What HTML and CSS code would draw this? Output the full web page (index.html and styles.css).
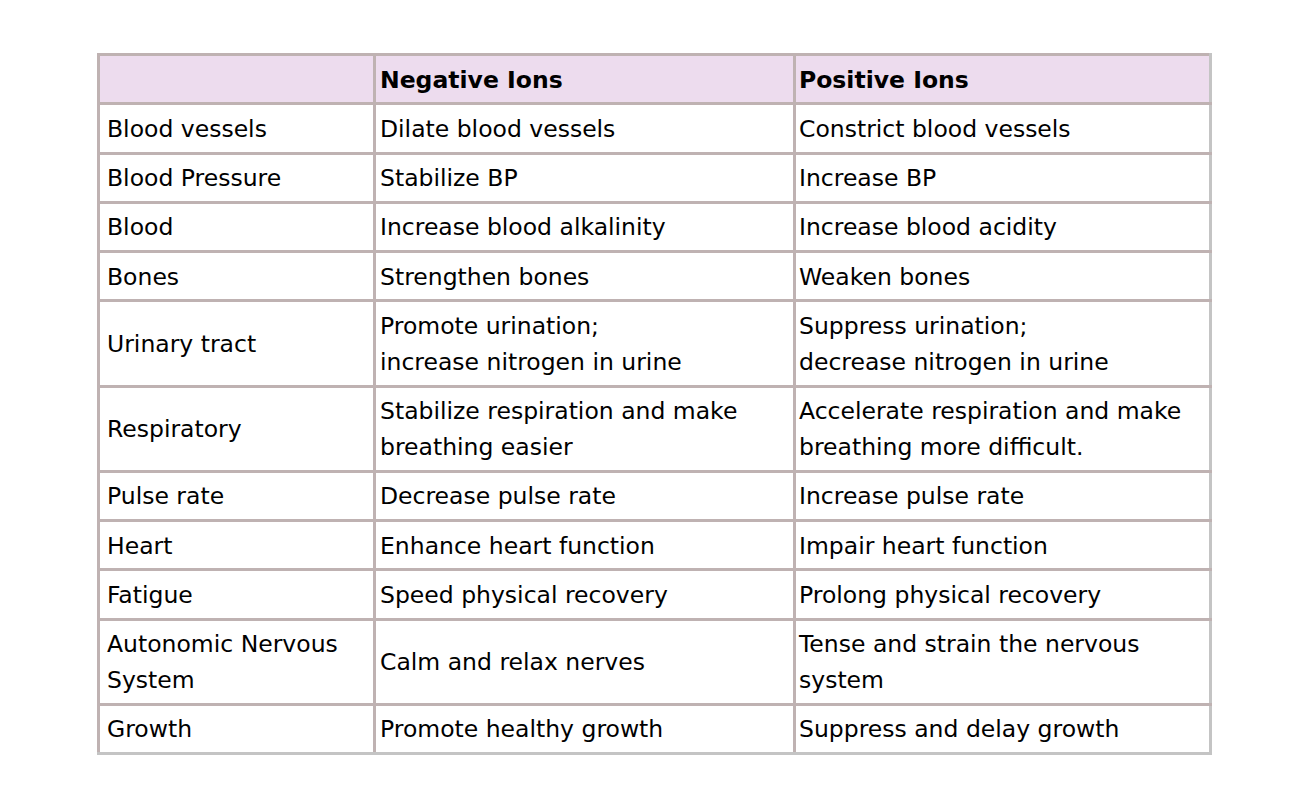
FILE: index.html
```html
<!DOCTYPE html>
<html>
<head>
<meta charset="utf-8">
<link rel="stylesheet" href="styles.css">
</head>
<body>
<table class="ions">
  <colgroup>
    <col class="c1"><col class="c2"><col class="c3">
  </colgroup>
  <thead>
    <tr><th></th><th>Negative Ions</th><th>Positive Ions</th></tr>
  </thead>
  <tbody>
    <tr><td>Blood vessels</td><td>Dilate blood vessels</td><td>Constrict blood vessels</td></tr>
    <tr><td>Blood Pressure</td><td>Stabilize BP</td><td>Increase BP</td></tr>
    <tr><td>Blood</td><td>Increase blood alkalinity</td><td>Increase blood acidity</td></tr>
    <tr><td>Bones</td><td>Strengthen bones</td><td>Weaken bones</td></tr>
    <tr><td>Urinary tract</td><td>Promote urination;<br>increase nitrogen in urine</td><td>Suppress urination;<br>decrease nitrogen in urine</td></tr>
    <tr><td>Respiratory</td><td>Stabilize respiration and make breathing easier</td><td>Accelerate respiration and make breathing more difficult.</td></tr>
    <tr><td>Pulse rate</td><td>Decrease pulse rate</td><td>Increase pulse rate</td></tr>
    <tr><td>Heart</td><td>Enhance heart function</td><td>Impair heart function</td></tr>
    <tr><td>Fatigue</td><td>Speed physical recovery</td><td>Prolong physical recovery</td></tr>
    <tr><td>Autonomic Nervous System</td><td>Calm and relax nerves</td><td>Tense and strain the nervous system</td></tr>
    <tr><td>Growth</td><td>Promote healthy growth</td><td>Suppress and delay growth</td></tr>
  </tbody>
</table>
</body>
</html>
```
FILE: styles.css
```css
html, body {
  margin: 0;
  padding: 0;
  background: #ffffff;
}
body {
  font-family: "DejaVu Sans", Verdana, sans-serif;
  font-size: 23.5px;
  color: #000000;
}
.ions {
  margin: 53px 0 0 97px;
  border-collapse: collapse;
  table-layout: fixed;
  width: 1112px;
  border-right: 3px solid #c4c4c4;
  border-bottom: 3px solid #c4c4c4;
}
.c1 { width: 276px; }
.c2 { width: 420px; }
.c3 { width: 416px; }
.ions th, .ions td {
  border: 3px solid #bfb2b2;
  line-height: 36px;
  padding: 5.5px 4px 4.75px 4px;
  text-align: left;
  vertical-align: middle;
  font-weight: normal;
}
.ions th {
  background: #eddcee;
  font-weight: bold;
}
.ions td:first-child, .ions th:first-child {
  padding-left: 7px;
}
.ions td:last-child, .ions th:last-child {
  padding-left: 3px;
  border-right-color: #c4c4c4;
}
.ions tbody tr:last-child td {
  border-bottom-color: #c4c4c4;
}
```
